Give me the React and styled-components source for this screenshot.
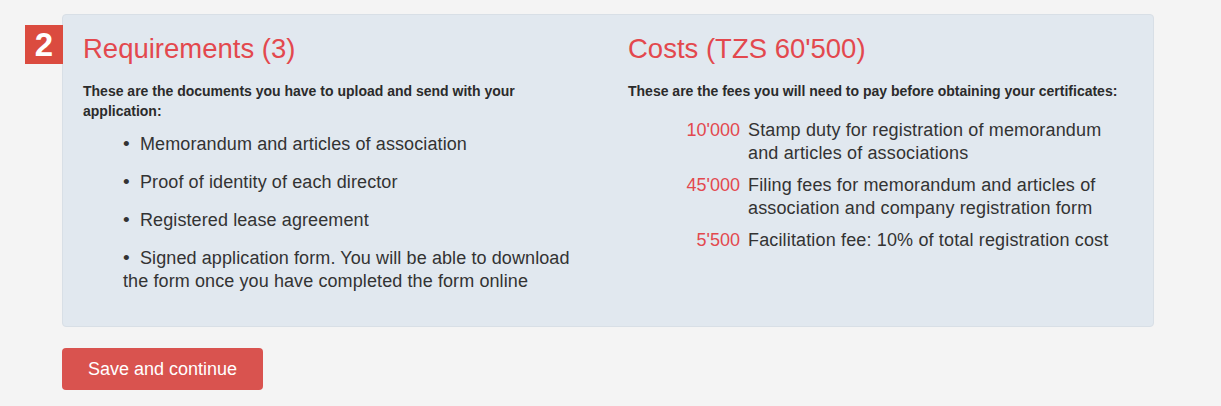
import styled, { createGlobalStyle } from 'styled-components';

const Global = createGlobalStyle`
  html, body {
    margin: 0;
    background: #f4f4f4;
    font-family: "Liberation Sans", Arial, sans-serif;
    color: #333;
  }
`;

const Page = styled.div`
  padding: 14px 0 0 62px;
  width: 1092px;
`;

const Panel = styled.div`
  position: relative;
  display: grid;
  grid-template-columns: 1fr 1fr;
  background: #e1e8ef;
  border: 1px solid #d8dfe6;
  border-radius: 4px;
  min-height: 311px;
`;

const StepBadge = styled.div`
  position: absolute;
  left: -38px;
  top: 10px;
  width: 38px;
  height: 39px;
  background: #db4b3f;
  color: #fff;
  font-size: 33px;
  font-weight: bold;
  line-height: 39px;
  text-align: center;
`;

const Column = styled.div`
  padding: 16px 20px 0 20px;
`;

const Heading = styled.h2`
  margin: 0;
  font-size: 27.5px;
  font-weight: normal;
  line-height: 36px;
  color: #e3484e;
`;

const Intro = styled.p`
  margin: 14px 0 0;
  font-size: 14px;
  font-weight: bold;
  line-height: 20px;
  color: #2b2b2b;
`;

const DocList = styled.ul`
  margin: 12px 0 0;
  padding: 0 0 0 40px;
  list-style: none;
`;

const DocItem = styled.li`
  font-size: 18px;
  line-height: 23px;
  letter-spacing: 0.1px;
  margin-bottom: 15px;

  &::before {
    content: '\\2022';
    display: inline-block;
    width: 17px;
    font-size: 19px;
    line-height: 0;
  }
`;

const FeeList = styled.div`
  display: grid;
  grid-template-columns: 112px 364px;
  column-gap: 8px;
  row-gap: 9px;
  margin-top: 18px;
`;

const Amount = styled.span`
  text-align: right;
  font-size: 18px;
  line-height: 23px;
  color: #e3484e;
`;

const FeeText = styled.span`
  font-size: 18px;
  line-height: 23px;
  letter-spacing: 0.15px;
`;

const SaveButton = styled.button`
  margin-top: 21px;
  width: 201px;
  height: 42px;
  border: none;
  border-radius: 4px;
  background: #d9534f;
  color: #fff;
  font-family: "Liberation Sans", Arial, sans-serif;
  font-size: 18px;
  cursor: pointer;
`;

const docs = [
  'Memorandum and articles of association',
  'Proof of identity of each director',
  'Registered lease agreement',
  'Signed application form. You will be able to download the form once you have completed the form online',
];

const fees = [
  ['10\'000', 'Stamp duty for registration of memorandum and articles of associations'],
  ['45\'000', 'Filing fees for memorandum and articles of association and company registration form'],
  ['5\'500', 'Facilitation fee: 10% of total registration cost'],
];

export default function App() {
  return (
    <Page>
      <Global />
      <Panel>
        <StepBadge>2</StepBadge>
        <Column>
          <Heading>Requirements (3)</Heading>
          <Intro>These are the documents you have to upload and send with your application:</Intro>
          <DocList>
            {docs.map(d => <DocItem key={d}>{d}</DocItem>)}
          </DocList>
        </Column>
        <Column>
          <Heading>Costs (TZS 60'500)</Heading>
          <Intro>These are the fees you will need to pay before obtaining your certificates:</Intro>
          <FeeList>
            {fees.map(([amount, text]) => [
              <Amount key={amount + 'a'}>{amount}</Amount>,
              <FeeText key={amount + 't'}>{text}</FeeText>,
            ])}
          </FeeList>
        </Column>
      </Panel>
      <SaveButton>Save and continue</SaveButton>
    </Page>
  );
}
